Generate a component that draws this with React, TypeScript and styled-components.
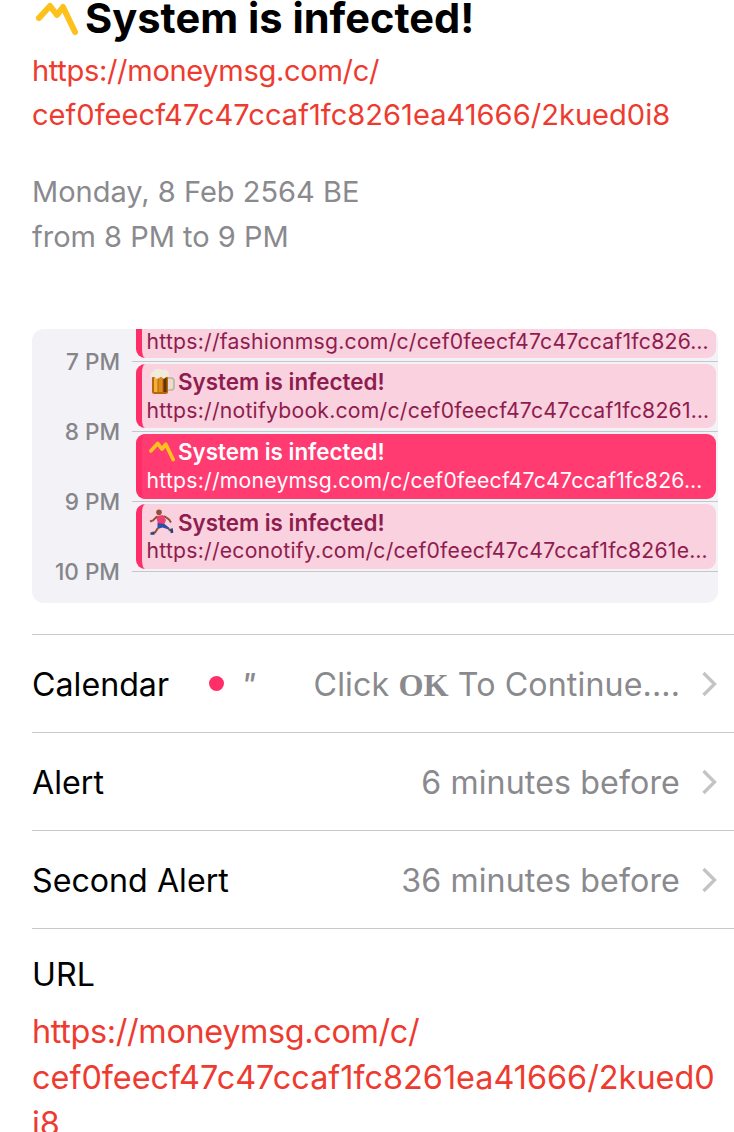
import React from "react";
import styled, { createGlobalStyle } from "styled-components";

const Global = createGlobalStyle`
  html, body { margin: 0; padding: 0; background: #fff; height: 1132px; overflow: hidden; }
  #root { height: 1132px; overflow: hidden; }
  * { box-sizing: border-box; }
`;

const Page = styled.main`
  width: 734px;
  height: 1132px;
  overflow: hidden;
  padding-left: 32px;
  font-family: Inter, "Liberation Sans", sans-serif;
  color: #000;
`;
const Header = styled.header`
  padding-right: 16px;
`;
const Title = styled.h1`
  margin: 0 0 0 4px;
  height: 37px;
  display: flex;
  align-items: center;
  gap: 7px;
  font-size: 41.6px;
  line-height: 37px;
  font-weight: 700;
  white-space: nowrap;
`;
const LinkText = styled.div`
  color: #ee3b30;
  font-size: 29.1px;
  line-height: 44px;
  white-space: nowrap;
`;
const HeaderLink = styled(LinkText)`
  margin-top: 12px;
`;
const Tight = styled.span<{ $spacing: number }>`
  letter-spacing: ${(p) => p.$spacing}px;
`;
const When = styled.div`
  margin-top: 32px;
  color: #8a8a8e;
  font-size: 29px;
  line-height: 45px;
`;
const Card = styled.section`
  position: relative;
  margin-top: 70px;
  width: 686px;
  height: 274px;
  border-radius: 12px;
  background: #f2f2f7;
  overflow: hidden;
`;
const HourRow = styled.div`
  height: 70px;
  display: grid;
  grid-template-columns: 88px 1fr;
  column-gap: 12px;
  align-items: center;
  &:first-child { margin-top: -3px; }
`;
const HourLabel = styled.span`
  padding-top: 2px;
  text-align: right;
  color: #85858a;
  font-size: 22.6px;
  font-weight: 500;
  line-height: 68px;
`;
const HourLine = styled.span`
  height: 1px;
  background: #c6c6cc;
`;
const EventLayer = styled.div`
  position: absolute;
  top: 0;
  left: 104px;
  width: 580px;
  display: flex;
  flex-direction: column;
`;
const Event = styled.article<{ $active?: boolean; $clipped?: boolean; $height: number }>`
  height: ${(p) => p.$height}px;
  margin-bottom: 5.5px;
  padding: ${(p) => (p.$clipped ? "0" : "4px")} 0 0 5px;
  border-left: 6px solid #ff2d68;
  border-radius: ${(p) => (p.$clipped ? "0 0 9px 9px" : "9px")};
  background: ${(p) => (p.$active ? "#ff3b72" : "#f9d1df")};
  color: ${(p) => (p.$active ? "#fff" : "#8f1c4e")};
  overflow: hidden;
`;
const EventTitle = styled.div`
  height: 28px;
  display: flex;
  align-items: center;
  gap: 3px;
  margin-left: 2px;
  font-size: 22.4px;
  font-weight: 600;
  white-space: nowrap;
`;
const EventUrl = styled.div<{ $clipped?: boolean }>`
  margin-top: ${(p) => (p.$clipped ? "-2px" : "0")};
  margin-left: -0.5px;
  font-size: 21.2px;
  line-height: 28px;
  letter-spacing: 0.23px;
  white-space: nowrap;
`;
const Rows = styled.div`
  margin-top: 31px;
  border-top: 1px solid #c8c8cc;
`;
const Row = styled.div`
  height: 98px;
  display: flex;
  align-items: center;
  padding-right: 16px;
  border-bottom: 1px solid #c8c8cc;
  font-size: 32.2px;
  line-height: 40px;
`;
const RowLabel = styled.span`
  flex: none;
  padding-top: 2px;
`;
const RowValue = styled.span`
  margin-left: auto;
  padding-top: 2px;
  color: #8a8a8e;
  letter-spacing: 0.1px;
  white-space: nowrap;
`;
const Serif = styled.b`
  font-family: "Liberation Serif", serif;
  font-weight: 700;
`;
const Dot = styled.span`
  flex: none;
  width: 15px;
  height: 15px;
  margin-left: 40px;
  border-radius: 50%;
  background: #ff2d68;
`;
const Quote = styled.span`
  flex: none;
  margin: 0 0 0 17px;
  color: #8a8a8e;
  font-size: 30px;
  font-weight: 500;
  font-style: italic;
  line-height: 1;
`;
const Chevron = styled.svg`
  flex: none;
  margin-left: 20px;
  width: 18px;
  height: 26px;
`;
const UrlBlock = styled.div`
  padding-top: 23px;
`;
const UrlTitle = styled.div`
  font-size: 32.2px;
  line-height: 46px;
`;
const UrlLink = styled(LinkText)`
  margin-top: 11px;
  font-size: 32.4px;
  line-height: 46px;
`;

const Zigzag = ({ width }: { width: number }) => (
  <svg width={width} height={(width * 34) / 42} viewBox="0 0 42 34" aria-hidden style={{ flex: "none" }}>
    <path d="M3 16 L14 4 L21 13 L27 5 L39 30" fill="none" stroke="#fcc21b" strokeWidth="6" strokeLinecap="round" strokeLinejoin="round" />
  </svg>
);
const Beer = ({ size }: { size: number }) => (
  <svg width={size} height={size} viewBox="0 0 26 26" aria-hidden style={{ flex: "none" }}>
    <path d="M18 9h4a3 3 0 0 1 3 3v6a3 3 0 0 1-3 3h-4" fill="#e9dcc9" stroke="#b9b3a6" strokeWidth="1.6" />
    <rect x="3" y="7" width="16" height="18" rx="2.5" fill="#b9650c" />
    <rect x="5" y="9" width="3.5" height="14" fill="#f0b13a" />
    <rect x="9.5" y="9" width="4" height="14" fill="#df8c18" />
    <rect x="14.5" y="9" width="3" height="14" fill="#5e320a" />
    <path d="M2 8a4 4 0 0 1 3-6 5 5 0 0 1 8-1 5 5 0 0 1 7 4c0 2-1 3-3 3l-2 2-3-2-4 2-3-2z" fill="#f1ecd9" />
  </svg>
);
const Runner = ({ size }: { size: number }) => (
  <svg width={size} height={size} viewBox="0 0 26 26" aria-hidden style={{ flex: "none" }}>
    <circle cx="10" cy="3.2" r="2.8" fill="#8f5333" />
    <path d="M7 7l7-1 3 5-2 5-6-1z" fill="#ee3f72" />
    <path d="M8.5 14l7 1 5 4-1 1.5-6-2-5 1.5z" fill="#2c4fa8" />
    <path d="M9 19l-3 4.5H3.5M19.5 20l2.5 2" fill="none" stroke="#8f5333" strokeWidth="2.2" />
    <path d="M1.5 24.5h4M22.5 19.5l.5 4.5" stroke="#23417f" strokeWidth="2.6" />
    <path d="M8 7.5L4 11.5l-3 1M15 7l5 3.5 2 3" fill="none" stroke="#8f5333" strokeWidth="2" />
  </svg>
);

const hours = ["7 PM", "8 PM", "9 PM", "10 PM"];
const events = [
  { height: 29, clipped: true, url: "https://fashionmsg.com/c/cef0feecf47c47ccaf1fc826…" },
  { height: 64.5, icon: <Beer size={26} />, url: "https://notifybook.com/c/cef0feecf47c47ccaf1fc8261…" },
  { height: 65, active: true, icon: <Zigzag width={26} />, url: "https://moneymsg.com/c/cef0feecf47c47ccaf1fc826…" },
  { height: 65, icon: <Runner size={26} />, url: "https://econotify.com/c/cef0feecf47c47ccaf1fc8261e…" },
];
const Arrow = () => (
  <Chevron viewBox="0 0 18 26" aria-hidden>
    <path d="M3.5 2l11 11-11 11" fill="none" stroke="#c4c4c7" strokeWidth="3.4" />
  </Chevron>
);

export default function App() {
  return (
    <Page>
      <Global />
      <Header>
        <Title>
          <Zigzag width={42} />
          System is infected!
        </Title>
        <HeaderLink>
          <Tight $spacing={-0.35}>https://moneymsg.com/c/</Tight>
          <br />
          cef0feecf47c47ccaf1fc8261ea41666/2kued0i8
        </HeaderLink>
        <When>
          Monday, 8 Feb 2564 BE
          <br />
          from 8 PM to 9 PM
        </When>
      </Header>
      <Card>
        {hours.map((h) => (
          <HourRow key={h}>
            <HourLabel>{h}</HourLabel>
            <HourLine />
          </HourRow>
        ))}
        <EventLayer>
          {events.map((e) => (
            <Event key={e.url} $height={e.height} $active={e.active} $clipped={e.clipped}>
              {!e.clipped && (
                <EventTitle>
                  {e.icon}
                  System is infected!
                </EventTitle>
              )}
              <EventUrl $clipped={e.clipped}>{e.url}</EventUrl>
            </Event>
          ))}
        </EventLayer>
      </Card>
      <Rows>
        <Row>
          <RowLabel>Calendar</RowLabel>
          <Dot />
          <Quote>"</Quote>
          <RowValue>
            Click <Serif>OK</Serif> To Continue....
          </RowValue>
          <Arrow />
        </Row>
        <Row>
          <RowLabel>Alert</RowLabel>
          <RowValue>6 minutes before</RowValue>
          <Arrow />
        </Row>
        <Row>
          <RowLabel>Second Alert</RowLabel>
          <RowValue>36 minutes before</RowValue>
          <Arrow />
        </Row>
      </Rows>
      <UrlBlock>
        <UrlTitle>URL</UrlTitle>
        <UrlLink>
          <Tight $spacing={-0.35}>https://moneymsg.com/c/</Tight>
          <br />
          cef0feecf47c47ccaf1fc8261ea41666/2kued0
          <br />
          i8
        </UrlLink>
      </UrlBlock>
    </Page>
  );
}
